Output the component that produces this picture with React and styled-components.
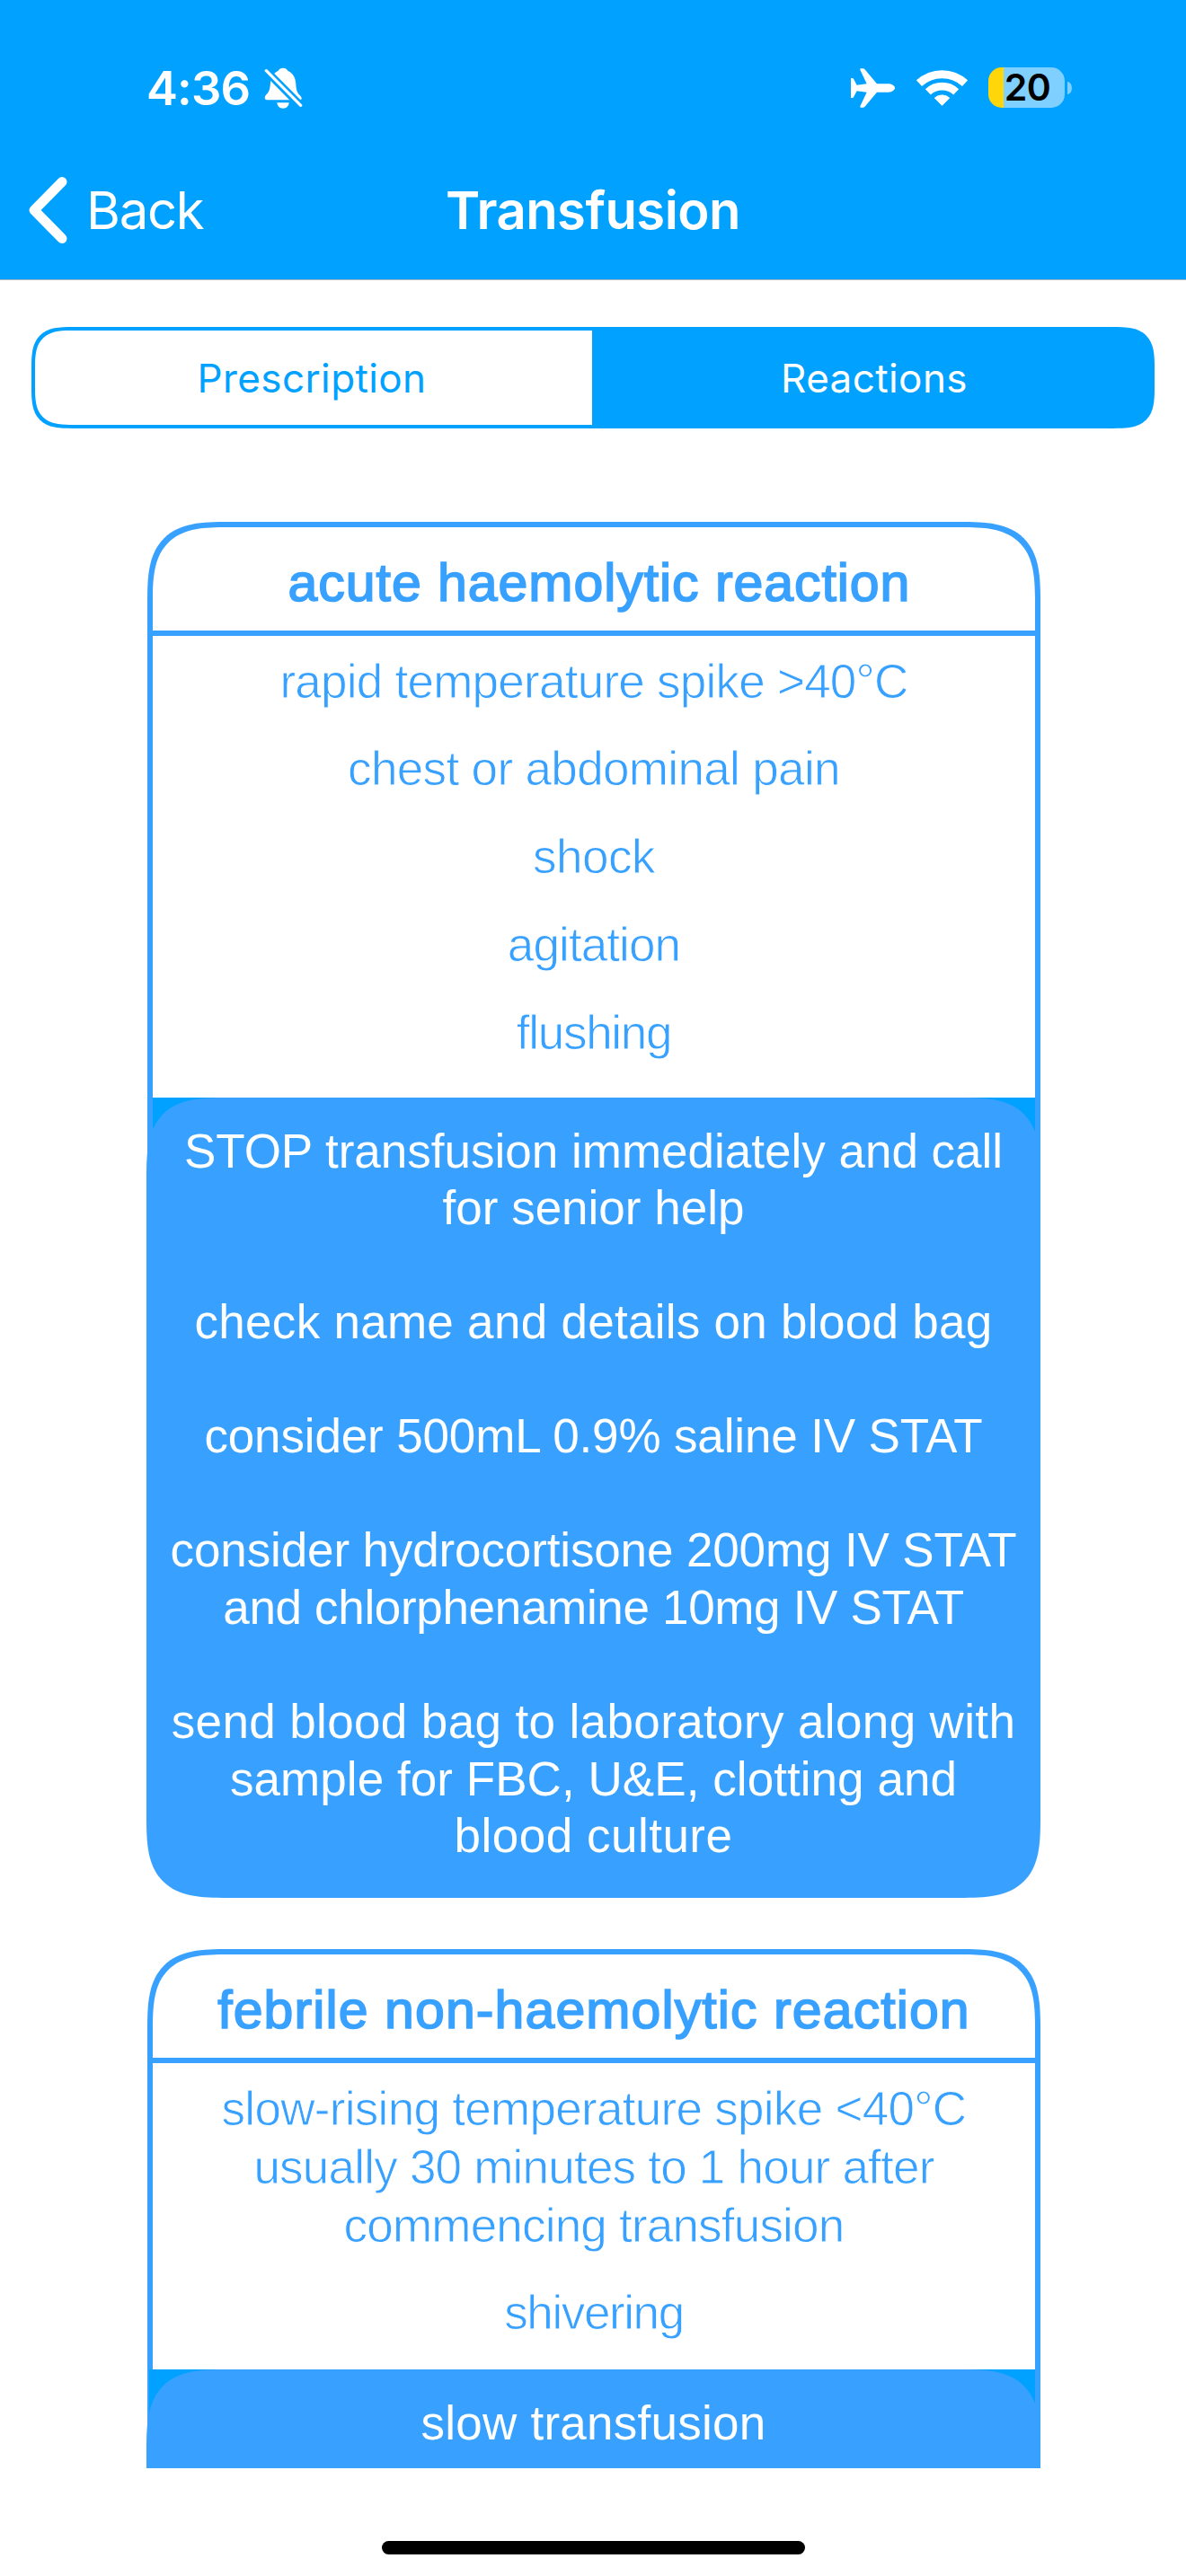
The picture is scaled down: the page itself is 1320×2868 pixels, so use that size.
import React from "react";
import styled, { createGlobalStyle, css } from "styled-components";

const SKY = "#00a1ff";
const BLUE = "#38a1ff";
const UI = `Inter, "Liberation Sans", sans-serif`;
const BODY = `"Liberation Sans", Arial, sans-serif`;

const GlobalStyle = createGlobalStyle`
  *, *::before, *::after { box-sizing: border-box; }
  html, body { margin: 0; padding: 0; background: #fff; }
`;

const Screen = styled.div`
  width: 1320px;
  height: 2868px;
  display: flex;
  flex-direction: column;
  background: #fff;
  overflow: hidden;
  font-family: ${BODY};
`;

const Header = styled.header`
  height: 312px;
  flex: none;
  display: flex;
  flex-direction: column;
  background: ${SKY};
  border-bottom: 1px solid #b3b8bd;
  color: #fff;
  font-family: ${UI};
`;

const StatusBar = styled.div`
  height: 195px;
  padding: 0 127px 0 163px;
  display: flex;
  align-items: center;
  justify-content: space-between;
`;

const StatusGroup = styled.div`
  display: flex;
  align-items: center;
`;

const Clock = styled.span`
  width: 117px;
  margin-right: 13.5px;
  font-size: 52.5px;
  line-height: 64px;
  font-weight: 600;
  letter-spacing: -0.9px;
  white-space: nowrap;
`;

const Battery = styled.div`
  width: 85px;
  height: 45px;
  margin-left: 23px;
  padding-left: 2px;
  display: flex;
  align-items: center;
  justify-content: center;
  border-radius: 15px;
  background: linear-gradient(to right, #ffd60a 17px, #80d0ff 17px);
  color: #000;
  font-size: 41px;
  line-height: 45px;
  font-weight: 600;
  letter-spacing: -0.5px;
`;

const BatteryTip = styled.span`
  width: 5px;
  height: 14px;
  margin-left: 3px;
  border-radius: 0 5px 5px 0 / 0 7px 7px 0;
  background: #80d0ff;
`;

const NavBar = styled.nav`
  height: 77px;
  display: grid;
  grid-template-columns: 1fr auto 1fr;
  align-items: center;
  padding: 0 30px;
`;

const BackButton = styled.div`
  display: flex;
  align-items: center;
  gap: 21px;
  font-size: 58px;
  line-height: 76px;
  letter-spacing: -1.3px;
`;

const NavTitle = styled.h1`
  margin: 0;
  font-size: 58px;
  line-height: 76px;
  font-weight: 600;
  letter-spacing: -0.55px;
`;

const continuous = (plain, wide, corners = "1 1 1 1") => {
  const at = (r) => corners.split(" ").map((c) => `${c * r}px`).join(" ");
  return css`
    border-radius: ${at(plain)};
    @supports (corner-shape: superellipse(1.6)) {
      border-radius: ${at(wide)};
      corner-shape: superellipse(1.6);
    }
  `;
};

const Segments = styled.div`
  height: 113px;
  flex: none;
  margin: 52px 35px 0;
  display: grid;
  grid-template-columns: 620px 1fr;
  border: 4px solid ${SKY};
  background: ${SKY};
  ${continuous(33, 46)}
  overflow: hidden;
  font-family: ${UI};
  font-size: 44px;
`;

const Segment = styled.div`
  display: flex;
  align-items: center;
  justify-content: center;
  padding: ${(p) => (p.$active ? "0 0 0 6px" : "0 4px 0 0")};
  font-weight: 400;
  letter-spacing: 0.4px;
  background: ${(p) => (p.$active ? SKY : "#fff")};
  color: ${(p) => (p.$active ? "#fff" : SKY)};
`;

const Scroller = styled.main`
  height: 2271px;
  flex: none;
  padding: 104px 162px 0 163px;
  overflow: hidden;
  display: flex;
  flex-direction: column;
  gap: 57.5px;
`;

const Card = styled.section`
  flex: none;
  width: 995px;
  display: flex;
  flex-direction: column;
`;

const Outline = styled.div`
  margin-left: 1px;
  border: 6px solid ${BLUE};
  border-bottom: 0;
  ${continuous(64, 90, "1 1 0 0")}
`;

const CardTitle = styled.h2`
  height: 121px;
  margin: 0;
  padding: 9px 0 0 ${(p) => p.$shift};
  display: flex;
  align-items: center;
  justify-content: center;
  border-bottom: 6px solid ${BLUE};
  color: ${BLUE};
  font-size: 59px;
  font-weight: 400;
  -webkit-text-stroke: 1.7px ${BLUE};
  letter-spacing: ${(p) => p.$track};
  white-space: nowrap;
`;

const Signs = styled.div`
  padding: 17.5px 0 ${(p) => p.$bottom};
  display: flex;
  flex-direction: column;
  gap: 32.75px;
  color: ${BLUE};
  -webkit-text-stroke: 0.8px #fff;
`;

const Sign = styled.div`
  font-size: 53px;
  line-height: 65px;
  text-align: center;
`;

const Line = styled.span`
  display: block;
  letter-spacing: ${(p) => p.$track}px;
  white-space: nowrap;
`;

const ActionsBack = styled.div`
  background:
    linear-gradient(${BLUE}, ${BLUE}) 1px 0 / ${(p) => p.$rule} 64px no-repeat,
    linear-gradient(${BLUE}, ${BLUE}) 989px 0 / 6px 90px no-repeat,
    linear-gradient(${SKY}, ${SKY}) 1px 0 / 990px 64px no-repeat;
`;

const Actions = styled.div`
  min-height: ${(p) => p.$minHeight};
  padding: 28px 0 37px;
  display: flex;
  flex-direction: column;
  gap: 63.55px;
  ${continuous(64, 90)}
  background: ${BLUE};
  color: #fff;
`;

const Action = styled.div`
  font-size: 53px;
  line-height: 63.55px;
  text-align: center;
`;

const HomeArea = styled.footer`
  flex: 1;
  display: flex;
  justify-content: center;
  padding-top: 81px;
`;

const HomeIndicator = styled.div`
  width: 471px;
  height: 15px;
  border-radius: 8px;
  background: #000;
`;

const BellOff = () => (
  <svg width="43" height="46" viewBox="0 0 129 138">
    <path
      fill="#fff"
      d="M63 2Q74 2 80 12C97 20 105 36 106 56C107 78 112 86 119 93Q126 99 125 105Q124 109 118 109H8Q2 108 2 101Q2 96 7 91C17 82 20 70 21 50C22 34 32 18 46 12Q52 2 63 2Z"
    />
    <path fill="#fff" d="M43 118H83C82 130 74 137 63 137S44 130 43 118Z" />
    <path stroke={SKY} strokeWidth="26" d="M-4 1L132 138" />
    <path stroke="#fff" strokeWidth="10" strokeLinecap="round" d="M7 11L122 127" />
  </svg>
);

const Airplane = () => (
  <svg width="49" height="44" viewBox="0 0 147 132">
    <path
      fill="#fff"
      d="M0 33H5Q8 33 9 35L20 56L53 52L31 5Q30 1 33 1H41Q44 1 46 3L87 52H125C138 52 147 60 147 66S138 80 125 80H87L46 129Q44 131 41 131H33Q30 131 31 127L53 80L20 76L9 97Q8 99 5 99H0Z"
    />
  </svg>
);

const WifiSvg = styled.svg`
  margin-left: 24px;
`;

const Wifi = () => (
  <WifiSvg width="57" height="43" viewBox="0 0 171 129">
    <g fill="none" stroke="#fff">
      <path strokeWidth="27" d="M9 50A112.5 112.5 0 0 1 162 50" />
      <path strokeWidth="26" d="M38.5 79A68 68 0 0 1 132.5 79" />
    </g>
    <path fill="#fff" stroke="#fff" strokeWidth="3" strokeLinejoin="round" d="M61 99A37 37 0 0 1 110 99L85.500 124Z" />
  </WifiSvg>
);

const Chevron = () => (
  <svg width="45" height="76" viewBox="0 0 45 76">
    <path
      d="M39 6.500L8 38L39 69.500"
      fill="none"
      stroke="#fff"
      strokeWidth="11"
      strokeLinecap="round"
      strokeLinejoin="round"
    />
  </svg>
);

const cards = [
  {
    title: "acute haemolytic reaction",
    track: "0.95px",
    shift: "12px",
    bottom: "40px",
    rule: "6px",
    signs: [
      [["rapid temperature spike >40°C", -0.75]],
      [["chest or abdominal pain", -0.65]],
      [["shock", -0.5]],
      [["agitation", -0.9]],
      [["flushing", -1.3]],
    ],
    actions: [
      [["STOP transfusion immediately and call", 0], ["for senior help", 0]],
      [["check name and details on blood bag", 0.28]],
      [["consider 500mL 0.9% saline IV STAT", -0.14]],
      [["consider hydrocortisone 200mg IV STAT", -0.13], ["and chlorphenamine 10mg IV STAT", -0.33]],
      [
        ["send blood bag to laboratory along with", 0.37],
        ["sample for FBC, U&E, clotting and", 0.06],
        ["blood culture", 0.5],
      ],
    ],
  },
  {
    title: "febrile non-haemolytic reaction",
    track: "1.1px",
    shift: "0px",
    bottom: "31px",
    rule: "2px",
    minHeight: "300px",
    signs: [
      [
        ["slow-rising temperature spike <40°C", -0.7],
        ["usually 30 minutes to 1 hour after", -0.78],
        ["commencing transfusion", -0.8],
      ],
      [["shivering", -1.4]],
    ],
    actions: [[["slow transfusion", 0.25]]],
  },
];

const Lines = ({ lines }) =>
  lines.map(([text, track]) => (
    <Line key={text} $track={track}>
      {text}
    </Line>
  ));

export default function App() {
  return (
    <>
      <GlobalStyle />
      <Screen>
        <Header>
          <StatusBar>
            <StatusGroup>
              <Clock>4:36</Clock>
              <BellOff />
            </StatusGroup>
            <StatusGroup>
              <Airplane />
              <Wifi />
              <Battery>20</Battery>
              <BatteryTip />
            </StatusGroup>
          </StatusBar>
          <NavBar>
            <BackButton>
              <Chevron />
              Back
            </BackButton>
            <NavTitle>Transfusion</NavTitle>
          </NavBar>
        </Header>
        <Segments>
          <Segment>Prescription</Segment>
          <Segment $active>Reactions</Segment>
        </Segments>
        <Scroller>
          {cards.map((card) => (
            <Card key={card.title}>
              <Outline>
                <CardTitle $shift={card.shift} $track={card.track}>
                  {card.title}
                </CardTitle>
                <Signs $bottom={card.bottom}>
                  {card.signs.map((lines) => (
                    <Sign key={lines[0][0]}>
                      <Lines lines={lines} />
                    </Sign>
                  ))}
                </Signs>
              </Outline>
              <ActionsBack $rule={card.rule}>
                <Actions $minHeight={card.minHeight || "0"}>
                  {card.actions.map((lines) => (
                    <Action key={lines[0][0]}>
                      <Lines lines={lines} />
                    </Action>
                  ))}
                </Actions>
              </ActionsBack>
            </Card>
          ))}
        </Scroller>
        <HomeArea>
          <HomeIndicator />
        </HomeArea>
      </Screen>
    </>
  );
}
